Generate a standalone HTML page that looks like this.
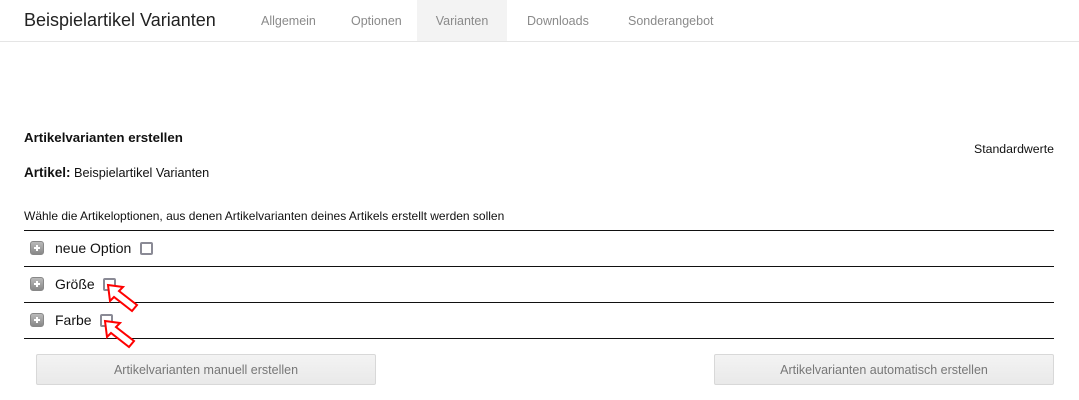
<!DOCTYPE html>
<html><head><meta charset="utf-8"><style>
*{margin:0;padding:0;box-sizing:border-box}
body{width:1079px;height:400px;background:#fff;font-family:"Liberation Sans",sans-serif;color:#111;position:relative;overflow:hidden}
.a{position:absolute;white-space:nowrap}
.hdr{position:absolute;left:0;top:0;width:1079px;height:42px;border-bottom:1px solid #e5e5e5}
.tab{position:absolute;top:0;height:41px;line-height:42px;font-size:12.5px;color:#8a8a8a}
.line{position:absolute;left:24px;width:1030px;height:1px;background:#111}
.plus{position:absolute;left:30px;width:14px;height:14px;border-radius:3px;background:linear-gradient(#bbb,#888);border:1px solid #888}
.plus:before{content:"";position:absolute;left:3px;top:5px;width:6px;height:2px;background:#fff}
.plus:after{content:"";position:absolute;left:5px;top:3px;width:2px;height:6px;background:#fff}
.cb{position:absolute;width:13px;height:13px;border:2px solid #8a8a95;border-radius:2px;background:#fff}
.lbl{position:absolute;left:55px;font-size:14px;color:#111}
.btn{position:absolute;top:354px;height:31px;border:1px solid #d8d8d8;border-radius:2px;background:linear-gradient(#f3f3f3,#e9e9e9);color:#777;font-size:12.5px;text-align:center;line-height:31px}
</style></head><body>
<div class="hdr"></div>
<div class="a" style="left:24px;top:10px;font-size:18px;color:#222">Beispielartikel Varianten</div>
<div class="tab" style="left:261px">Allgemein</div>
<div class="tab" style="left:351px">Optionen</div>
<div class="tab" style="left:417px;width:90px;background:#f3f3f3;text-align:center">Varianten</div>
<div class="tab" style="left:527px">Downloads</div>
<div class="tab" style="left:628px">Sonderangebot</div>

<div class="a" style="left:24px;top:130px;font-size:13.3px;font-weight:bold">Artikelvarianten erstellen</div>
<div class="a" style="right:25px;top:142px;font-size:12.3px">Standardwerte</div>
<div class="a" style="left:24px;top:165px;font-size:12.7px"><b style="font-size:13.5px">Artikel:</b> Beispielartikel Varianten</div>
<div class="a" style="left:24px;top:209px;font-size:12px">Wähle die Artikeloptionen, aus denen Artikelvarianten deines Artikels erstellt werden sollen</div>

<div class="line" style="top:230px"></div>
<div class="plus" style="top:241px"></div><div class="lbl" style="top:240px">neue Option</div><div class="cb" style="left:140px;top:242px"></div>
<div class="line" style="top:266px"></div>
<div class="plus" style="top:277px"></div><div class="lbl" style="top:276px">Größe</div><div class="cb" style="left:103px;top:278px"></div>
<div class="line" style="top:302px"></div>
<div class="plus" style="top:313px"></div><div class="lbl" style="top:312px">Farbe</div><div class="cb" style="left:100px;top:314px"></div>
<div class="line" style="top:338px"></div>

<svg class="a" style="left:0;top:0" width="1079" height="400">
<g fill="#fff" stroke="#f00" stroke-width="2" stroke-linejoin="miter">
<polygon points="108,285 123,287 119,291 137,305 132,311 114,297 110,301"/>
<polygon points="105,321 120,323 116,327 134,341 129,347 111,333 107,337"/>
</g></svg>

<div class="btn" style="left:36px;width:340px">Artikelvarianten manuell erstellen</div>
<div class="btn" style="left:714px;width:340px">Artikelvarianten automatisch erstellen</div>
</body></html>
